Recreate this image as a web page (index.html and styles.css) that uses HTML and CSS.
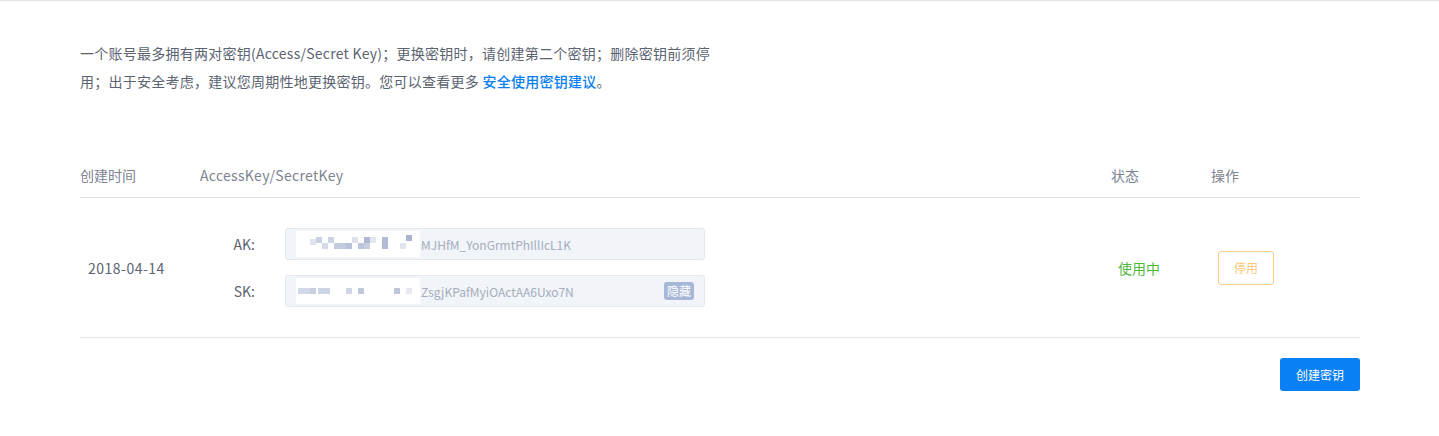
FILE: index.html
```html
<!DOCTYPE html>
<html lang="zh-CN">
<head>
<meta charset="utf-8">
<link rel="stylesheet" href="styles.css">
</head>
<body>
<div class="page">
  <p class="intro">一个账号最多拥有两对密钥(Access/Secret Key)；更换密钥时，请创建第二个密钥；删除密钥前须停<br>用；出于安全考虑，建议您周期性地更换密钥。您可以查看更多 <a class="link" href="#">安全使用密钥建议</a>。</p>

  <div class="table">
    <div class="row head">
      <div class="c1">创建时间</div>
      <div class="c2">AccessKey/SecretKey</div>
      <div class="c3">状态</div>
      <div class="c4">操作</div>
    </div>
    <div class="row body">
      <div class="c1 date">2018-04-14</div>
      <div class="c2 keys">
        <div class="key">
          <span class="klabel">AK:</span>
          <div class="kbox">
            <span class="mask">
              <i class="px" style="left:14px;top:8px;background:#dfe3ee"></i>
              <i class="px" style="left:20px;top:6px;background:#c9d0e2"></i>
              <i class="px" style="left:26px;top:12px;background:#d3d9e7"></i>
              <i class="px" style="left:32px;top:6px;background:#cdd4e4"></i>
              <i class="px w2" style="left:38px;top:12px;background:#c3cbe0"></i>
              <i class="px" style="left:50px;top:12px;background:#b9c2da"></i>
              <i class="px" style="left:56px;top:6px;background:#dde2ec"></i>
              <i class="px" style="left:62px;top:12px;background:#bcc5dc"></i>
              <i class="px" style="left:68px;top:6px;background:#aeb8d3"></i>
              <i class="px" style="left:68px;top:12px;background:#c6cde1"></i>
              <i class="px" style="left:74px;top:6px;background:#e3e7f0"></i>
              <i class="px tall" style="left:86px;top:6px;background:#b3bcd6"></i>
              <i class="px" style="left:104px;top:12px;background:#e1e5ee"></i>
              <i class="px" style="left:110px;top:4px;background:#a9b4d0"></i>
            </span>
            <span class="kval">MJHfM_YonGrmtPhIllIcL1K</span>
          </div>
        </div>
        <div class="key">
          <span class="klabel">SK:</span>
          <div class="kbox">
            <span class="mask">
              <i class="px w2" style="left:2px;top:10px;background:#d2d8e7"></i>
              <i class="px" style="left:14px;top:10px;background:#c7cee2"></i>
              <i class="px w2" style="left:22px;top:10px;background:#cdd4e5"></i>
              <i class="px" style="left:50px;top:10px;background:#cfd5e5"></i>
              <i class="px" style="left:62px;top:10px;background:#bfc7dc"></i>
              <i class="px" style="left:98px;top:10px;background:#bec6dc"></i>
              <i class="px" style="left:110px;top:10px;background:#e6e9f1"></i>
            </span>
            <span class="kval">ZsgjKPafMyiOActAA6Uxo7N</span>
            <span class="badge">隐藏</span>
          </div>
        </div>
      </div>
      <div class="c3 status">使用中</div>
      <div class="c4"><button class="btn-stop">停用</button></div>
    </div>
  </div>

  <div class="actions">
    <button class="btn-create">创建密钥</button>
  </div>
</div>
</body>
</html>
```

FILE: styles.css
```css
* { box-sizing: border-box; }
html, body { margin: 0; padding: 0; background: #fff; }
body {
  font-family: "Noto Sans CJK SC", "Noto Sans", sans-serif;
  font-size: 14px;
  color: #5b6371;
  border-top: 1px solid #dfe4eb;
}
.page { padding: 0 79px 0 80px; }
.intro {
  margin: 0;
  padding-top: 38px;
  line-height: 28px;
  font-size: 14px;
  letter-spacing: 0.25px;
  color: #5b6371;
}
.link { color: #0a7ff2; text-decoration: none; font-weight: 500; }

.table { margin-top: 58px; }
.row { display: flex; align-items: center; }
.head {
  height: 45px;
  border-bottom: 1px solid #dde1e8;
  color: #7c8391;
}
.head .c2 { letter-spacing: 0.3px; }
.c1 { width: 120px; flex: none; }
.c2 { flex: 1; }
.c3 { width: 100px; flex: none; }
.c4 { width: 149px; flex: none; }

.body {
  padding: 30px 0;
  border-bottom: 1px solid #e3e7ed;
}
.date { padding-left: 8px; color: #5b6371; letter-spacing: 0.5px; }
.keys { display: flex; flex-direction: column; gap: 15px; padding-left: 8px; }
.key { display: flex; align-items: center; }
.klabel { width: 47px; text-align: right; margin-right: 30px; color: #5b6371; }
.kbox {
  width: 420px;
  height: 32px;
  background: #f1f4f8;
  border: 1px solid #e4e8ef;
  border-radius: 3px;
  display: flex;
  align-items: center;
  padding-left: 9px;
  padding-right: 10px;
}
.mask {
  position: relative;
  width: 126px;
  height: 28px;
  flex: none;
  background: #fff;
  border: 1px solid #f3f5f9;
}
.px { position: absolute; width: 6px; height: 6px; }
.px.w2 { width: 12px; }
.px.tall { height: 12px; }
.kval { color: #a4adbd; font-size: 12px; flex: 1; }
.badge {
  background: #a7b7d7;
  color: #fff;
  font-size: 12px;
  line-height: 18px;
  padding: 0 3px;
  border-radius: 3px;
}
.status { padding-left: 7px; color: #4fb83f; }
.btn-stop {
  margin-left: 7px;
  width: 56px;
  height: 34px;
  border: 1px solid #fbd07d;
  border-radius: 3px;
  background: #fff;
  color: #fbc777;
  font-family: inherit;
  font-size: 12px;
  padding: 0;
}
.actions { display: flex; justify-content: flex-end; padding-top: 20px; }
.btn-create {
  width: 80px;
  height: 33px;
  border: none;
  border-radius: 3px;
  background: #0a80f5;
  color: #fff;
  font-family: inherit;
  font-size: 12px;
  padding: 0;
}
```
